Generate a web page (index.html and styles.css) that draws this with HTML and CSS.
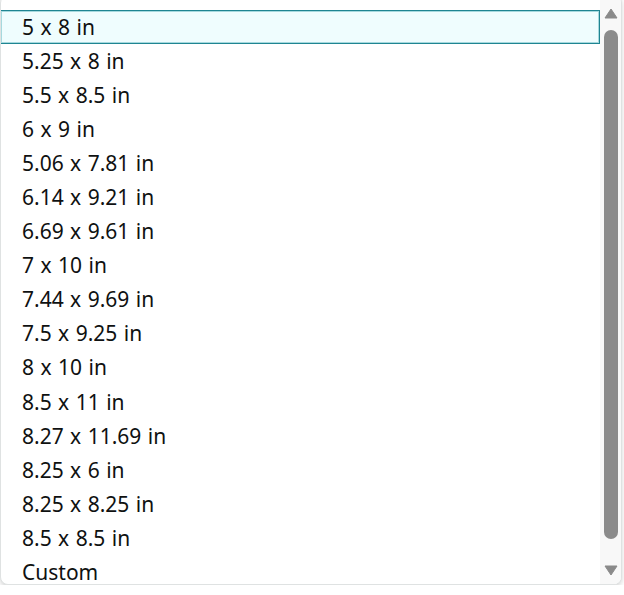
FILE: index.html
```html
<!DOCTYPE html>
<html lang="en">
  <head>
    <meta charset="UTF-8" />
    <meta name="viewport" content="width=device-width, initial-scale=1.0" />
    <title>Trim size</title>
    <link rel="stylesheet" href="styles.css">
  </head>

  <body>
    <div class="dropdown">
      <ul class="options">
        <li class="option selected">5 x 8 in</li>
        <li class="option">5.25 x 8 in</li>
        <li class="option">5.5 x 8.5 in</li>
        <li class="option">6 x 9 in</li>
        <li class="option">5.06 x 7.81 in</li>
        <li class="option">6.14 x 9.21 in</li>
        <li class="option">6.69 x 9.61 in</li>
        <li class="option">7 x 10 in</li>
        <li class="option">7.44 x 9.69 in</li>
        <li class="option">7.5 x 9.25 in</li>
        <li class="option">8 x 10 in</li>
        <li class="option">8.5 x 11 in</li>
        <li class="option">8.27 x 11.69 in</li>
        <li class="option">8.25 x 6 in</li>
        <li class="option">8.25 x 8.25 in</li>
        <li class="option">8.5 x 8.5 in</li>
        <li class="option">Custom</li>
      </ul>
      <div class="scrollbar">
        <svg class="arrow" width="14" height="11" viewBox="0 0 14 11">
          <path d="M7 1 L13 10 L1 10 Z" fill="#8a8a8a" stroke="#8a8a8a" stroke-linejoin="round" />
        </svg>
        <div class="thumb"></div>
        <svg class="arrow" width="14" height="11" viewBox="0 0 14 11">
          <path d="M1 1 L13 1 L7 10 Z" fill="#8a8a8a" stroke="#8a8a8a" stroke-linejoin="round" />
        </svg>
      </div>
    </div>
  </body>
</html>
```

FILE: styles.css
```css
* {
  box-sizing: border-box;
}

body {
  margin: 0;
  background: #ffffff;
  font-family: "Noto Sans", "Open Sans", sans-serif;
  color: #0f1111;
}

.dropdown {
  display: flex;
  width: 622px;
  height: 590px;
  margin-top: -5px;
  border: 1px solid #dfe2e2;
  border-radius: 8px;
  background: #ffffff;
  box-shadow: 0 2px 5px rgba(15, 17, 17, 0.18);
  overflow: hidden;
}

.options {
  flex: 1;
  list-style: none;
  margin: 0;
  padding: 14px 0 0 0;
}

.option {
  height: 34.06px;
  line-height: 32px;
  padding-left: 20px;
  font-size: 21px;
  word-spacing: 1px;
  border: 1px solid transparent;
  white-space: nowrap;
}

.option.selected {
  margin-left: -1px;
  padding-left: 21px;
  background: #effdfe;
  border: 1px solid #1f8592;
  box-shadow: inset 0 0 0 1px #a6d9de;
}

.scrollbar {
  width: 21px;
  display: flex;
  flex-direction: column;
  align-items: center;
  padding: 12px 0 8px 0;
  background: #f8f8f8;
}

.thumb {
  width: 14px;
  flex: 1;
  margin: 11px 0 26px 0;
  border-radius: 7px;
  background: #8b8b8b;
}
```
